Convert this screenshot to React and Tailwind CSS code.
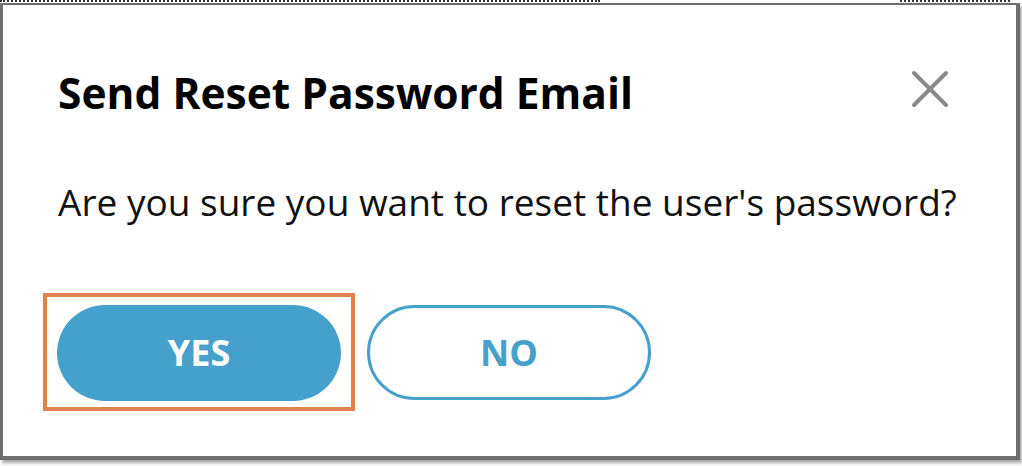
import React from 'react';

export default function App() {
  return (
    <div className="relative w-[1022px] h-[466px] bg-white overflow-hidden" style={{ fontFamily: '"Open Sans", sans-serif' }}>
      <div className="flex h-[3px] gap-[300px]">
        <div className="w-[600px] border-t-2 border-dotted border-[#333]" />
        <div className="w-[110px] border-t-2 border-dotted border-[#333]" />
      </div>
      <div className="flex w-[1020px] h-[457px] flex-col border-l-[3px] border-t-2 border-r-4 border-b-4 border-[#6e6e6e] bg-white shadow-[2px_3px_3px_rgba(0,0,0,0.35)]">
        <div className="flex items-start justify-between pl-[55px] pr-[66px] pt-[60px]">
          <h1 className="text-[42.5px] font-bold leading-[56px] text-black">Send Reset Password Email</h1>
          <button className="mt-[4px] text-[#8a8a8a]">
            <svg width="40" height="40" viewBox="0 0 40 40" fill="none" stroke="currentColor" strokeWidth="4" strokeLinecap="round">
              <path d="M4 4 L36 36 M36 4 L4 36" />
            </svg>
          </button>
        </div>
        <p className="mt-[56px] pl-[55px] text-[37px] leading-[50px] text-[#111]">Are you sure you want to reset the user's password?</p>
        <div className="mt-[66px] ml-[40px] flex items-start gap-[12px]">
          <div className="border-4 border-[#e0834b] pl-[10px] pr-[10px] pt-[8px] pb-[6px]">
            <button className="flex h-[96px] w-[284px] items-center justify-center rounded-full bg-[#45a1cc] text-[36px] font-bold text-white">YES</button>
          </div>
          <button className="mt-[12px] flex h-[95px] w-[284px] items-center justify-center rounded-full border-[3px] border-[#45a1cc] bg-white text-[36px] font-bold text-[#45a1cc]">NO</button>
        </div>
      </div>
    </div>
  );
}
